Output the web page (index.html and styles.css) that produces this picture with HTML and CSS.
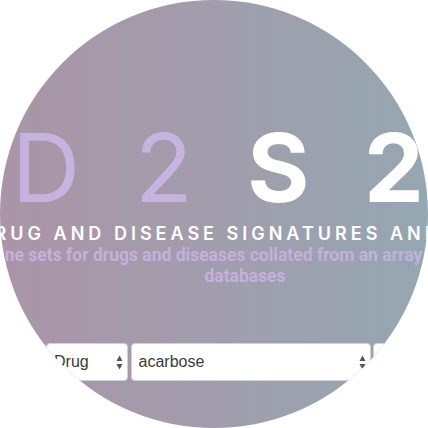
FILE: index.html
```html
<!DOCTYPE html>
<html lang="en">
<head>
<meta charset="utf-8">
<title>D2S2</title>
<link rel="stylesheet" href="styles.css">
</head>
<body>
<div class="lens">
  <div class="page">
    <h1 class="logo"><span class="logo-d">D2</span><span class="logo-s">S2</span></h1>
    <h2 class="title">Drug and Disease Signatures and Sets</h2>
    <p class="subtitle">Gene sets for drugs and diseases collated from an array of curated databases</p>
    <div class="search">
      <div class="select sel-type"><span class="select-value">Drug</span><svg class="arrows" width="7" height="15" viewBox="0 0 7 15"><path d="M3.5 0.5 L6.5 6 H0.5 Z"/><path d="M3.5 14.5 L6.5 9 H0.5 Z"/></svg></div>
      <div class="select sel-term"><span class="select-value">acarbose</span><svg class="arrows" width="7" height="15" viewBox="0 0 7 15"><path d="M3.5 0.5 L6.5 6 H0.5 Z"/><path d="M3.5 14.5 L6.5 9 H0.5 Z"/></svg></div>
      <div class="select sel-extra"><span class="select-value"></span><svg class="arrows" width="7" height="15" viewBox="0 0 7 15"><path d="M3.5 0.5 L6.5 6 H0.5 Z"/><path d="M3.5 14.5 L6.5 9 H0.5 Z"/></svg></div>
    </div>
  </div>
</div>
</body>
</html>
```
FILE: styles.css
```css
body {
  margin: 0;
  background: #ffffff;
}

.lens {
  width: 428px;
  height: 428px;
  border-radius: 50%;
  overflow: hidden;
  background: linear-gradient(90deg, #aa95a7 0%, #a19dac 50%, #95a7b1 100%);
}

.page {
  width: 490px;
  padding-top: 120px;
  display: flex;
  flex-direction: column;
  align-items: center;
}

.logo {
  margin: 0;
  font-family: Inter, "Liberation Sans", sans-serif;
  font-size: 95px;
  line-height: 1;
  letter-spacing: 54.5px;
  white-space: nowrap;
}

.logo-d {
  font-weight: 400;
  color: #c7b3df;
}

.logo-s {
  font-weight: 700;
  color: #ffffff;
}

.title {
  margin: 10px 0 0;
  font-family: Inter, "Liberation Sans", sans-serif;
  font-size: 18px;
  font-weight: 600;
  line-height: 1;
  letter-spacing: 4px;
  text-transform: uppercase;
  color: #ffffff;
  white-space: nowrap;
}

.subtitle {
  margin: 2px 0 0;
  flex: none;
  width: 570px;
  text-align: center;
  font-family: Roboto, "Liberation Sans", sans-serif;
  font-size: 17.5px;
  font-weight: 700;
  line-height: 21px;
  color: #c4b0dc;
}

.search {
  display: flex;
  gap: 2.5px;
  margin-top: 56px;
  width: 398px;
}

.select {
  flex: none;
  height: 38px;
  box-sizing: border-box;
  display: flex;
  align-items: center;
  justify-content: space-between;
  padding: 0 4px 0 7px;
  background: #ffffff;
  border: 1px solid #cfd2d6;
  border-radius: 4px;
  font-family: "Liberation Sans", Arial, sans-serif;
  font-size: 16px;
  color: #3a3a3a;
}

.sel-type { width: 82px; }
.sel-term { width: 240px; }
.sel-extra { width: 71px; }

.arrows {
  fill: #555555;
}
```
